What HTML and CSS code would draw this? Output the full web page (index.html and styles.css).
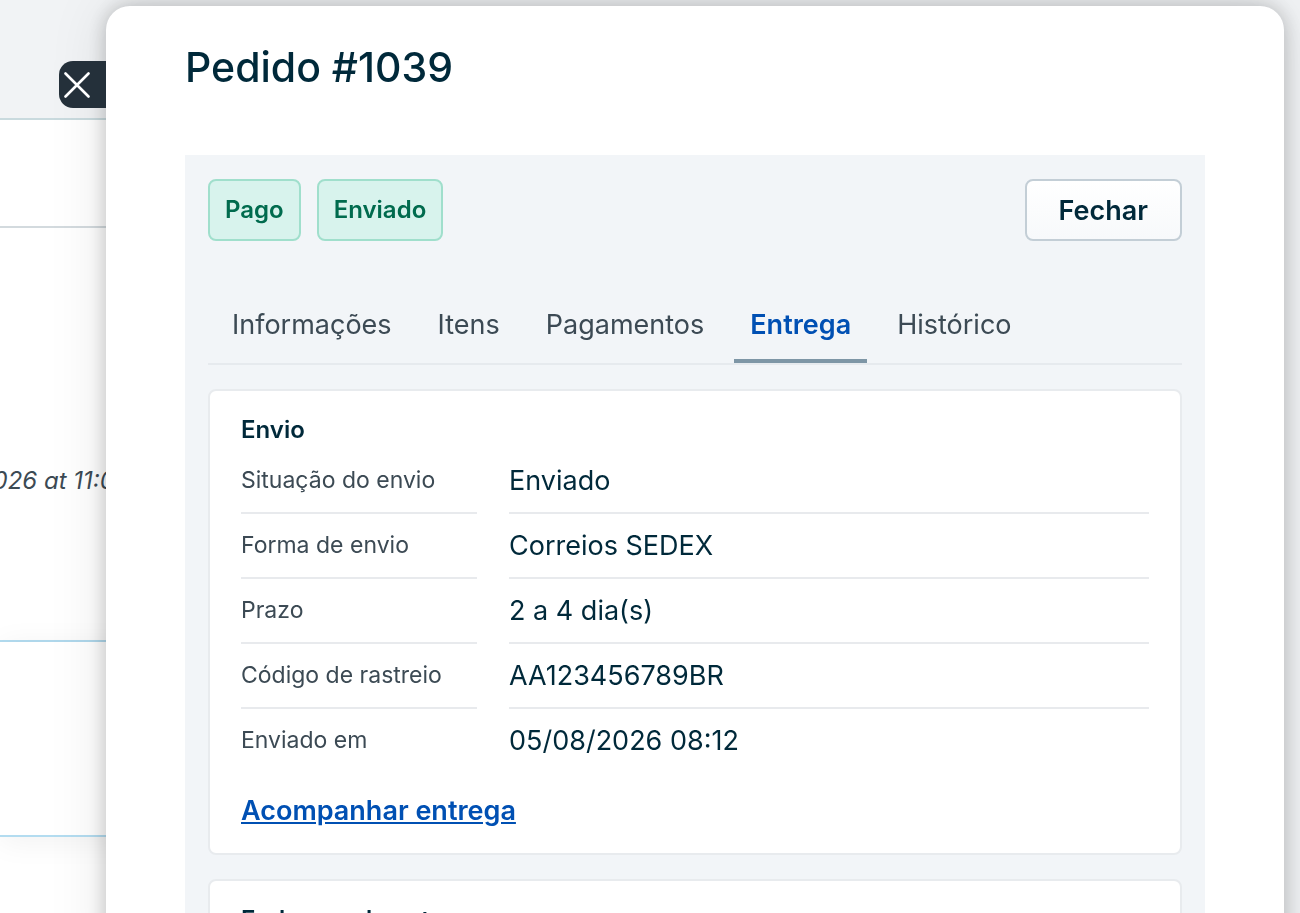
FILE: index.html
```
<!DOCTYPE html>
<html lang="pt-BR">
<head>
  <meta charset="UTF-8">
  <meta name="viewport" content="width=device-width, initial-scale=1.0">
  <title>Pedido #1039</title>
  <link rel="stylesheet" href="styles.css">
</head>
<body>
  <!-- Page behind the drawer -->
  <main class="page">
    <div class="page-bar"></div>
    <div class="page-head"></div>
    <div class="page-date"><em>2026 at 11:00</em></div>
    <div class="page-row"></div>
  </main>

  <!-- Order drawer -->
  <aside class="drawer">
    <button type="button" class="drawer-close" aria-label="Fechar painel">
      <svg width="26" height="26" viewBox="0 0 26 26" fill="none" stroke="#fff" stroke-width="2.6" stroke-linecap="round">
        <path d="M1.5 1.5 24.5 24.5M24.5 1.5 1.5 24.5"/>
      </svg>
    </button>

    <div class="drawer-body">
      <h1>Pedido #1039</h1>

      <section class="order">
        <div class="order-head">
          <span class="tag">Pago</span>
          <span class="tag">Enviado</span>
          <button type="button" class="btn">Fechar</button>
        </div>

        <nav class="tabs">
          <a href="#informacoes">Informações</a>
          <a href="#itens">Itens</a>
          <a href="#pagamentos">Pagamentos</a>
          <a href="#entrega" class="active">Entrega</a>
          <a href="#historico">Histórico</a>
        </nav>

        <div class="card" id="entrega">
          <h2>Envio</h2>
          <dl class="details">
            <dt>Situação do envio</dt>
            <dd>Enviado</dd>
            <dt>Forma de envio</dt>
            <dd>Correios SEDEX</dd>
            <dt>Prazo</dt>
            <dd>2 a 4 dia(s)</dd>
            <dt>Código de rastreio</dt>
            <dd>AA123456789BR</dd>
            <dt>Enviado em</dt>
            <dd>05/08/2026 08:12</dd>
          </dl>
          <a class="track" href="#rastreio">Acompanhar entrega</a>
        </div>

        <div class="card">
          <h2>Endereço de entrega</h2>
        </div>
      </section>
    </div>
  </aside>
</body>
</html>
```

FILE: styles.css
```
* {
  box-sizing: border-box;
}

body {
  margin: 0;
  height: 100vh;
  overflow: hidden;
  font-family: Inter, "Liberation Sans", sans-serif;
  font-size: 27px;
  color: #00293a;
  background: #f1f3f5;
}

h1, h2, dl, dd {
  margin: 0;
}

/* page behind */
.page {
  display: flex;
  flex-direction: column;
  width: 130px;
  height: 100%;
  background: #fff;
}

.page-bar {
  height: 120px;
  background: #f1f3f5;
  border-bottom: 2px solid #c9dade;
}

.page-head {
  height: 108px;
  border-bottom: 2px solid #d3dade;
}

.page-date {
  display: flex;
  justify-content: flex-end;
  height: 414px;
  padding-top: 238px;
  border-bottom: 2px solid #b3dcf0;
  font-size: 24px;
  line-height: 30px;
  color: #3c4a54;
  white-space: nowrap;
}

.page-row {
  height: 195px;
  border-bottom: 2px solid #b3dcf0;
  box-shadow: 0 4px 30px rgba(0, 0, 0, 0.06);
}

/* drawer */
.drawer {
  position: fixed;
  inset: 6px 16px -60px 106px;
  border-radius: 24px 24px 0 0;
  background: #fff;
  box-shadow: 0 0 20px rgba(0, 0, 0, 0.22), 0 0 60px rgba(0, 0, 0, 0.1);
}

.drawer-close {
  position: absolute;
  top: 55px;
  right: 100%;
  display: flex;
  align-items: center;
  width: 47px;
  height: 47px;
  padding: 0 5px;
  border: 0;
  border-radius: 14px 0 0 14px;
  background: #24303a;
  cursor: pointer;
}

.drawer-body {
  height: 100%;
  padding: 36px 79px 0;
  overflow: hidden;
}

h1 {
  margin-bottom: 63px;
  font-size: 41px;
  font-weight: 500;
  line-height: 50px;
}

.order {
  padding: 24px 23px;
  background: #f2f5f8;
}

.order-head {
  display: flex;
  gap: 16px;
}

.tag {
  padding: 14px 15px;
  border: 2px solid #a0dfcc;
  border-radius: 8px;
  background: #d8f3ed;
  color: #006b4e;
  font-size: 24px;
  font-weight: 600;
  line-height: 30px;
}

.btn {
  margin-left: auto;
  padding: 0 32px;
  border: 2px solid #c3ced6;
  border-radius: 8px;
  background: linear-gradient(#fff, #f7f9fb);
  color: #00293a;
  font-family: inherit;
  font-size: 27px;
  font-weight: 600;
  cursor: pointer;
}

.tabs {
  display: flex;
  gap: 14px;
  margin: 40px 0 24px;
  padding: 0 8px;
  border-bottom: 2px solid #e6eaee;
}

.tabs a {
  padding: 27px 16px 18px;
  border-bottom: 4px solid transparent;
  color: #3c4a54;
  line-height: 33px;
  text-decoration: none;
}

.tabs a.active {
  border-bottom-color: #7e96a6;
  color: #0050b3;
  font-weight: 600;
}

.card {
  margin-bottom: 24px;
  padding: 24px 31px 26px;
  border: 2px solid #e8ebee;
  border-radius: 8px;
  background: #fff;
}

h2 {
  margin-bottom: 4px;
  font-size: 24px;
  font-weight: 600;
  line-height: 30px;
}

.details {
  display: grid;
  grid-template-columns: 236px 1fr;
  column-gap: 32px;
}

.details dt,
.details dd {
  padding: 15px 0;
  border-bottom: 2px solid #e8eaed;
  line-height: 33px;
}

.details dt {
  color: #3c4a54;
  font-size: 23px;
}

.details dt:last-of-type,
.details dd:last-of-type {
  border-bottom: 0;
}

.track {
  display: inline-block;
  margin-top: 22px;
  color: #0050b3;
  font-weight: 600;
  line-height: 33px;
}
```
